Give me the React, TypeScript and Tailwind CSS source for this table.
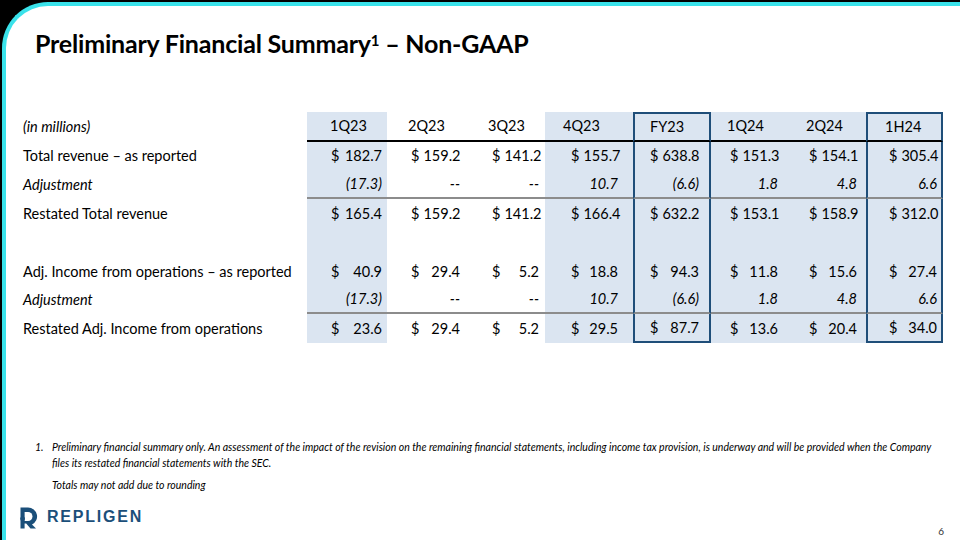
import { Fragment, type ReactNode } from "react";

type Col = {
  head: string;
  shade: boolean;
  box: boolean;
  hp: string; // header padding
  dp: string; // accounting cell padding ($ left, number right)
  np: string; // right padding for plain cells
};

const cols: Col[] = [
  { head: "1Q23", shade: true, box: false, hp: "pl-[23px]", dp: "pl-[24px] pr-[5px]", np: "pr-[5px]" },
  { head: "2Q23", shade: false, box: false, hp: "pl-[21px]", dp: "pl-[24px] pr-[7px]", np: "pr-[7px]" },
  { head: "3Q23", shade: false, box: false, hp: "pl-[21px]", dp: "pl-[25px] pr-[6px]", np: "pr-[6px]" },
  { head: "4Q23", shade: true, box: false, hp: "pl-[18px]", dp: "pl-[26px] pr-[15px]", np: "pr-[15px]" },
  { head: "FY23", shade: true, box: true, hp: "pl-[15px]", dp: "pl-[15px] pr-[10px]", np: "pr-[10px]" },
  { head: "1Q24", shade: true, box: false, hp: "pl-[16px]", dp: "pl-[19px] pr-[12px]", np: "pr-[12px]" },
  { head: "2Q24", shade: true, box: false, hp: "pl-[16px]", dp: "pl-[19px] pr-[9px]", np: "pr-[9px]" },
  { head: "1H24", shade: true, box: true, hp: "pl-[17px]", dp: "pl-[21px] pr-[4px]", np: "pr-[4px]" },
];

type Row = {
  label: string;
  italic?: boolean;
  dollar?: boolean;
  values: string[];
  line?: boolean; // gray rule under the row
  h: string;
};

const rows: Row[] = [
  {
    label: "Total revenue – as reported",
    dollar: true,
    values: ["182.7", "159.2", "141.2", "155.7", "638.8", "151.3", "154.1", "305.4"],
    h: "h-[28px]",
  },
  {
    label: "Adjustment",
    italic: true,
    values: ["(17.3)", "--", "--", "10.7", "(6.6)", "1.8", "4.8", "6.6"],
    line: true,
    h: "h-[29px]",
  },
  {
    label: "Restated Total revenue",
    dollar: true,
    values: ["165.4", "159.2", "141.2", "166.4", "632.2", "153.1", "158.9", "312.0"],
    h: "h-[29px]",
  },
  { label: "", values: ["", "", "", "", "", "", "", ""], h: "h-[29px]" },
  {
    label: "Adj. Income from operations – as reported",
    dollar: true,
    values: ["40.9", "29.4", "5.2", "18.8", "94.3", "11.8", "15.6", "27.4"],
    h: "h-[29px]",
  },
  {
    label: "Adjustment",
    italic: true,
    values: ["(17.3)", "--", "--", "10.7", "(6.6)", "1.8", "4.8", "6.6"],
    line: true,
    h: "h-[28px]",
  },
  {
    label: "Restated Adj. Income from operations",
    dollar: true,
    values: ["23.6", "29.4", "5.2", "29.5", "87.7", "13.6", "20.4", "34.0"],
    h: "h-[29px]",
  },
];

function Cell({
  col,
  children,
  className,
  top,
  bottom,
}: {
  col: Col;
  children?: ReactNode;
  className?: string;
  top?: boolean;
  bottom?: boolean;
}) {
  return (
    <div
      className={[
        "flex items-center",
        col.shade ? "bg-[#dbe5f1]" : "bg-white",
        col.box ? "border-x-2 border-x-[#1f4e79]" : "",
        col.box && top ? "border-t-2 border-t-[#1f4e79]" : "",
        col.box && bottom ? "border-b-2 border-b-[#1f4e79]" : "",
        className ?? "",
      ].join(" ")}
    >
      {children}
    </div>
  );
}

function RepligenMark() {
  return (
    <svg width="20" height="23" viewBox="0 0 20 23">
      <path
        d="M2.5 1.5 H10 A9 9 0 0 1 14 18.6 L18 22.5 H12.5 L8.2 17.6 H6.6 V22.5 H2.5 Z"
        fill="#1b4f7a"
      />
      <path d="M6.6 6 H10 A4.5 4.5 0 0 1 10 15 H6.6 Z" fill="#fff" />
      <circle cx="4.6" cy="12.8" r="2.4" fill="#1b4f7a" />
    </svg>
  );
}

export default function App() {
  return (
    <div className="h-[540px] w-[960px] overflow-hidden bg-black pl-[2px] pt-[2px] font-['Lato','Liberation_Sans',sans-serif] text-black">
      <div className="relative flex h-[540px] flex-col rounded-tl-[46px] border-l-4 border-t-4 border-[#3ae2ea] bg-white">
        <h1 className="ml-[29px] mt-[22px] text-[25px] font-bold leading-[30px] tracking-[-0.2px]">
          Preliminary Financial Summary
          <sup className="text-[15px]">1</sup> – Non-GAAP
        </h1>

        <div className="ml-[17px] mt-[54px] grid grid-cols-[284px_80px_80px_78px_88px_78px_79px_76px_77px] text-[14.5px]">
          {/* header */}
          <div className="flex h-[30px] items-center italic">(in millions)</div>
          {cols.map((c) => (
            <Cell
              key={c.head}
              col={c}
              top
              className={`h-[30px] border-b-2 border-b-black ${c.hp}`}
            >
              {c.head}
            </Cell>
          ))}

          {rows.map((r, ri) => (
            <Fragment key={ri}>
              <div className={`flex items-center ${r.h} ${r.italic ? "italic" : ""}`}>
                {r.label}
              </div>
              {cols.map((c, ci) => (
                <Cell
                  key={ci}
                  col={c}
                  bottom={ri === rows.length - 1}
                  className={[
                    r.h,
                    r.line ? "border-b-2 border-b-[#8c8c8c]" : "",
                    r.dollar ? `justify-between gap-[4px] ${c.dp}` : `justify-end ${c.np}`,
                    r.italic ? "italic" : "",
                  ].join(" ")}
                >
                  {r.dollar && <span>$</span>}
                  <span>{r.values[ci]}</span>
                </Cell>
              ))}
            </Fragment>
          ))}
        </div>

        <div className="ml-[29px] mt-[96px] text-[10.5px] italic leading-[16px]">
          <div className="flex">
            <span className="w-[17px] shrink-0">1.</span>
            <span className="w-[890px]">
              Preliminary financial summary only. An assessment of the impact of the revision on the
              remaining financial statements, including income tax provision, is underway and will be
              provided when the Company files its restated financial statements with the SEC.
            </span>
          </div>
          <div className="mt-[6px] pl-[17px]">Totals may not add due to rounding</div>
        </div>

        <div className="ml-[12px] mt-[12px] flex items-center gap-[9px]">
          <RepligenMark />
          <span className="font-['Liberation_Sans',sans-serif] text-[16px] font-semibold tracking-[1.8px] text-[#1b4f7a]">
            REPLIGEN
          </span>
        </div>

        <div className="absolute bottom-[3px] right-[16px] text-[10px] text-[#333]">6</div>
      </div>
    </div>
  );
}
